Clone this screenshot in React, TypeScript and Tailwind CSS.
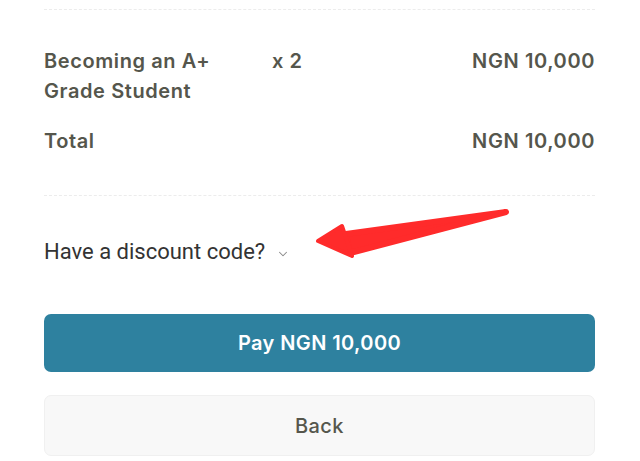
import { ChevronDown } from 'lucide-react'

export default function App() {
  return (
    <div className="relative w-[640px] h-[461px] bg-white overflow-hidden" style={{ fontFamily: 'Inter, sans-serif' }}>
      <div className="ml-[44px] mr-[45px] pt-[9px]">
        <div className="border-t border-dashed border-[#ececec]" />

        <div className="pt-[36px] pb-[39px] text-[20px] leading-[30px] font-semibold tracking-[0.6px] text-[#55564c]">
          <div className="flex">
            <div className="w-[228px]">Becoming an A+<br />Grade Student</div>
            <div className="flex-1">x 2</div>
            <div>NGN 10,000</div>
          </div>
          <div className="flex justify-between mt-[20px]">
            <div>Total</div>
            <div>NGN 10,000</div>
          </div>
        </div>

        <div className="border-t border-dashed border-[#ececec]" />

        <div className="flex items-center h-[118px] pb-[8px]">
          <span className="text-[22px] text-[#333333]" style={{ fontFamily: 'Roboto, sans-serif' }}>Have a discount code?</span>
          <ChevronDown className="w-[14px] h-[14px] ml-[11px] mt-[5px] text-[#8a8a8a]" strokeWidth={1.75} />
        </div>

        <button className="w-full h-[58px] rounded-[7px] bg-[#2e819f] text-white text-[20px] font-semibold tracking-[0.4px]">
          Pay NGN 10,000
        </button>

        <button className="w-full h-[61px] mt-[23px] rounded-[7px] bg-[#f8f8f8] border border-[#f0f0f0] text-[#55564c] text-[20px] font-medium tracking-[0.4px]">
          Back
        </button>
      </div>

      {/* annotation arrow */}
      <svg className="absolute left-0 top-0" width="640" height="461">
        <path d="M506 212 L346 234 L350 253 Z" fill="#ff2b2b" stroke="#ff2b2b" strokeWidth="6" strokeLinejoin="round" />
        <path d="M318 241 L342 226 L352 256 Z" fill="#ff2b2b" stroke="#ff2b2b" strokeWidth="4" strokeLinejoin="round" />
      </svg>
    </div>
  )
}
